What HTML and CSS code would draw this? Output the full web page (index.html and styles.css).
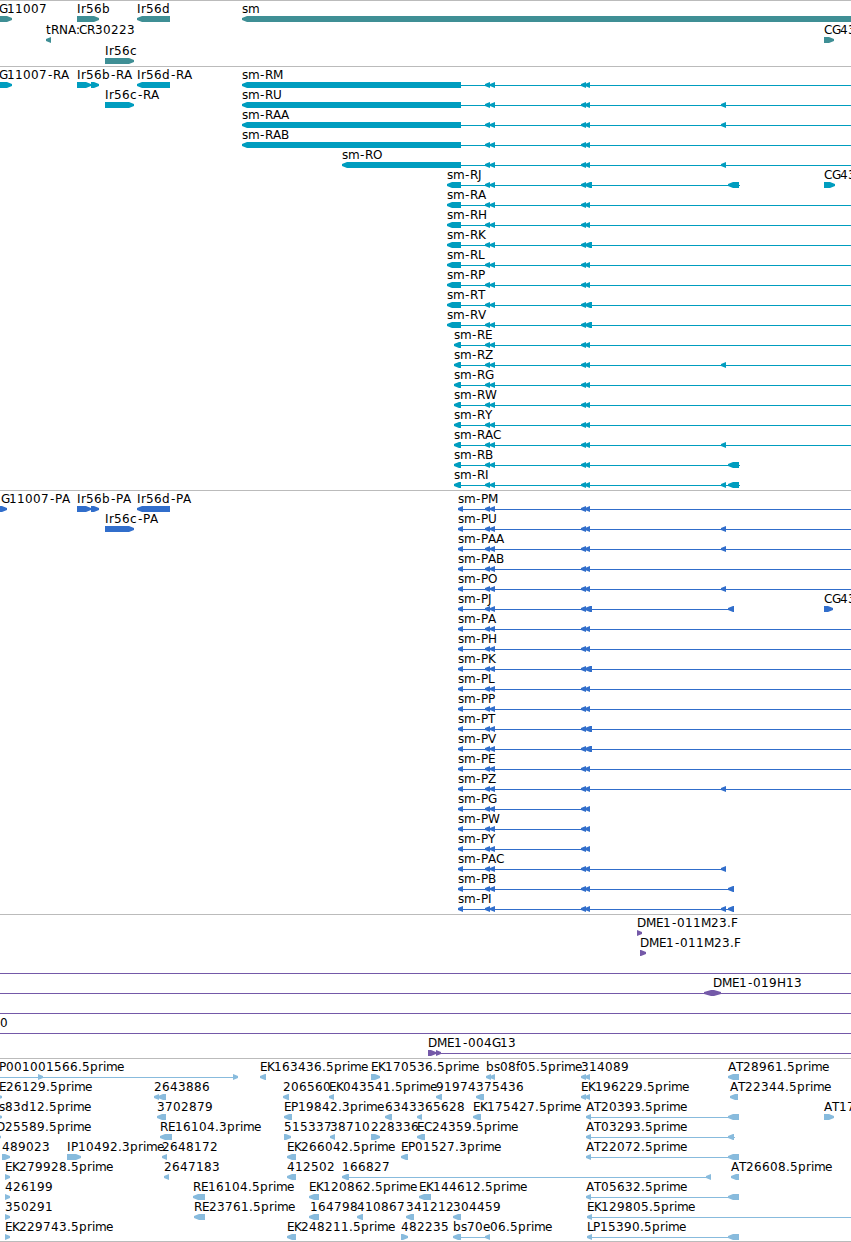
FILE: index.html
```html
<!DOCTYPE html>
<html lang="en">
<head>
    <meta charset="UTF-8">
    <meta name="viewport" content="width=device-width, initial-scale=1.0">
    <title>sm region</title>
    <link rel="stylesheet" href="styles.css">
</head>
<body>
    <main id="browser">
        <section class="track gene" id="gene"></section>
        <section class="track mrna" id="mrna"></section>
        <section class="track cds" id="cds"></section>
        <section class="track bac" id="bac"></section>
        <section class="track est" id="est"></section>
    </main>
    <script src="tracks.js"></script>
</body>
</html>
```
FILE: styles.css
```css
body{margin: 0; padding: 0; background-color: white;}

#browser{display: flex; flex-direction: column; width: 851px; overflow: hidden; border-bottom: 1px solid #bbb;}

.track{box-sizing: border-box; border-top: 1px solid #bbb; overflow: hidden;}
.track svg{display: block; width: 851px; height: 100%;}
.track text{font-family: "DejaVu Sans", sans-serif; font-size: 12px; fill: black;}

.gene{height: 66px; color: #3f8f95;}
.mrna{height: 424px; color: #009dbf;}
.cds{height: 424px; color: #316ecb;}
.bac{height: 144px; color: #7459a8;}
.est{height: 183px; color: #88bbdd;}

.glyph, .intron{fill: currentColor;}
```
FILE: tracks.js
```js
// advance of each character in the label font
var advance = {
    "-": 6, ".": 4, ":": 3, A: 8, B: 8, C: 8, D: 9, E: 7, F: 6, G: 8, H: 9, I: 4, J: 4, K: 7, L: 6,
    M: 10, N: 9, O: 9, P: 7, R: 8, T: 7, U: 9, V: 8, W: 11, Y: 7, Z: 7,
    b: 8, c: 7, d: 8, e: 7, f: 4, i: 3, m: 11, p: 8, r: 5, s: 6, t: 5
};
var FIRST = 18; // centre of the first row

// feature: [row, label, label x, exons, intron start, intron end]
var gene = [
    [0, "G11007", -1, "R0-12"],
    [0, "Ir56b", 77, "R77-99"],
    [0, "Ir56d", 137, "L137-170"],
    [0, "sm", 242, "L242-860"],
    [1, "tRNA:CR30223", 46, "L46-51"],
    [1, "CG43", 824, "R824-834"],
    [2, "Ir56c", 105, "R105-134"]
];

var mrna = [
    [0, "G11007-RA", -1, "R0-12"],
    [0, "Ir56b-RA", 77, "R77-91 R91-99"],
    [0, "Ir56d-RA", 137, "L137-170"],
    [1, "Ir56c-RA", 105, "R105-134"],
    [5, "CG43", 824, "R824-835"]
];
var cds = [
    [0, "G11007-PA", 1, "R0-7"],
    [0, "Ir56b-PA", 77, "R77-91 R91-99"],
    [0, "Ir56d-PA", 137, "L137-170"],
    [1, "Ir56c-PA", 105, "R105-134"],
    [5, "CG43", 824, "R824-833"]
];

// the sm isoforms share most of their exons
var isoforms = ["M", "U", "AA", "AB", "O", "J", "A", "H", "K", "L", "P", "T", "V", "E", "Z", "G", "W", "Y", "AC", "B", "I"];
isoforms.forEach(function(name, row){
    var wide = ["J", "K", "T", "V"].includes(name);
    var middle = " L485-490 L490-495 L581-586 " + (wide ? "L585-592" : "L585-590");
    var extra = ["U", "AA", "O", "Z", "AC", "I"].includes(name) ? " L721-726" : "";
    var last = ["J", "B", "I"].includes(name);

    var start = row < 4 ? 242 : row == 4 ? 342 : row < 13 ? 447 : 454;
    mrna.push([row, "sm-R" + name, start, "L" + start + "-461" + middle + extra + (last ? " L728-739" : ""),
        461, last ? 740 : 851]);

    var end = 851;
    if(["G", "W", "Y"].includes(name)) end = 590;
    if(name == "AC") end = 726;
    if(last) end = 734;
    cds.push([row, "sm-P" + name, 458, "L458-463" + middle + extra + (last ? " L728-734" : ""), 463, end]);
});

var bac = [
    [0, "DME1-011M23.F", 637, "R637-642"],
    [1, "DME1-011M23.F", 640, "R640-646"],
    [2, "", 0, "", 0, 851],
    [3, "DME1-019H13", 713, "B704-721", 0, 851],
    [4, "", 0, "", 0, 851],
    [5, "0", 0, "", 0, 851],
    [6, "DME1-004G13", 428, "R428-436 R436-441", 436, 851]
];

var est = [
    [0, "P001001566.5prime", -1, "R38-43 R233-238", 0, 233],
    [0, "EK163436.5prime", 260, "L260-266"],
    [0, "EK170536.5prime", 371, "R371-380"],
    [0, "bs08f05.5prime", 486, "L486-491 L490-495"],
    [0, "314089", 581, "L581-586 L585-590"],
    [0, "AT28961.5prime", 728, "L728-739"],

    [1, "E26129.5prime", -1, "R-3-2"],
    [1, "2643886", 154, "L154-159 L158-166"],
    [1, "206560", 283, "L283-289"],
    [1, "EK043541.5prime", 329, "L329-334"],
    [1, "91974", 436, "L436-442"],
    [1, "375436", 476, "L476-484"],
    [1, "EK196229.5prime", 581, "L581-586 L585-590"],
    [1, "AT22344.5prime", 730, "L730-738"],

    [2, "s83d12.5prime", -1, "R-3-2"],
    [2, "3702879", 157, "L157-166"],
    [2, "EP19842.3prime", 284, "L284-292"],
    [2, "6343", 385, "L385-392"],
    [2, "365628", 417, "L417-422"],
    [2, "EK175427.5prime", 473, "L473-481"],
    [2, "AT20393.5prime", 586, "L586-591 L728-739", 591, 728],
    [2, "AT17", 824, "R824-834"],

    [3, "D25589.5prime", -4, "R-4-1"],
    [3, "RE16104.3prime", 160, "L160-172"],
    [3, "515337", 284, "R284-291"],
    [3, "38710", 330, "L330-335"],
    [3, "228336", 371, "R371-380"],
    [3, "EC24359.5prime", 417, "L417-425"],
    [3, "AT03293.5prime", 586, "L586-591 L728-734", 591, 735],

    [4, "489023", 2, "R2-10"],
    [4, "IP10492.3prime", 67, "R67-81"],
    [4, "2648172", 162, "L162-167"],
    [4, "EK266042.5prime", 287, "L287-296"],
    [4, "EP01527.3prime", 401, "L401-408"],
    [4, "AT22072.5prime", 586, "L586-591 L728-739", 591, 728],

    [5, "EK279928.5prime", 5, "R5-10"],
    [5, "2647183", 164, "L164-169"],
    [5, "412502", 287, "L287-296"],
    [5, "166827", 342, "L342-349 L706-711", 349, 706],
    [5, "AT26608.5prime", 731, "L731-739"],

    [6, "426199", 5, "R5-10"],
    [6, "RE16104.5prime", 193, "L193-205"],
    [6, "EK120862.5prime", 309, "L309-319"],
    [6, "EK144612.5prime", 419, "L419-431"],
    [6, "AT05632.5prime", 586, "L586-591 L728-739", 591, 728],

    [7, "350291", 5, "R5-10"],
    [7, "RE23761.5prime", 194, "L194-205"],
    [7, "164798", 310, "L309-319"],
    [7, "410867", 357, "L357-363"],
    [7, "341212", 406, "L406-414"],
    [7, "304459", 453, "L453-461"],
    [7, "EK129805.5prime", 587, "L587-592", 592, 851],

    [8, "EK229743.5prime", 5, "R5-10"],
    [8, "EK248211.5prime", 287, "L287-296"],
    [8, "482235", 401, "R401-408"],
    [8, "bs70e06.5prime", 453, "L453-461 L485-490", 461, 485],
    [8, "LP15390.5prime", 587, "L587-592 L728-739", 592, 728]
];

// arrow pointing left (L), right (R) or both ways (B)
function arrow(type, x1, x2, y){
    var tip = Math.min(type == "B" ? 7 : 5, x2 - x1);
    var t = y - 3, b = y + 3;
    var left = type == "R" ? x1 + "," + b + " " + x1 + "," + t
        : (x1 + tip) + "," + b + " " + x1 + "," + (y + 1) + " " + x1 + "," + (y - 1) + " " + (x1 + tip) + "," + t;
    var right = type == "L" ? x2 + "," + t + " " + x2 + "," + b
        : (x2 - tip) + "," + t + " " + x2 + "," + (y - 1) + " " + x2 + "," + (y + 1) + " " + (x2 - tip) + "," + b;
    return '<polygon class="glyph" points="' + left + " " + right + '"/>';
}

function label(str, x, y){
    var xs = [];
    for(var i = 0; i < str.length; i++){
        xs.push(str[i] == "-" ? x + 1 : x); // keeps the hyphen in the middle of its cell
        x += advance[str[i]] || 8;
    }
    return '<text x="' + xs.join(" ") + '" y="' + y + '">' + str + '</text>';
}

function drawTrack(id, features, pitch){
    var out = "";
    features.forEach(function(f){
        var y = FIRST + f[0] * pitch;
        if(f.length > 4){
            out += '<rect class="intron" x="' + f[4] + '" y="' + y + '" width="' + (f[5] - f[4]) + '" height="1"/>';
        }
        (f[3].match(/[LRB]-?\d+-\d+/g) || []).forEach(function(e){
            var m = e.match(/([LRB])(-?\d+)-(\d+)/);
            out += arrow(m[1], +m[2], +m[3], y);
        });
        if(f[1]) out += label(f[1], f[2], y - 6);
    });
    document.getElementById(id).innerHTML = "<svg>" + out + "</svg>";
}

drawTrack("gene", gene, 21);
drawTrack("mrna", mrna, 20);
drawTrack("cds", cds, 20);
drawTrack("bac", bac, 20);
drawTrack("est", est, 20);
```
